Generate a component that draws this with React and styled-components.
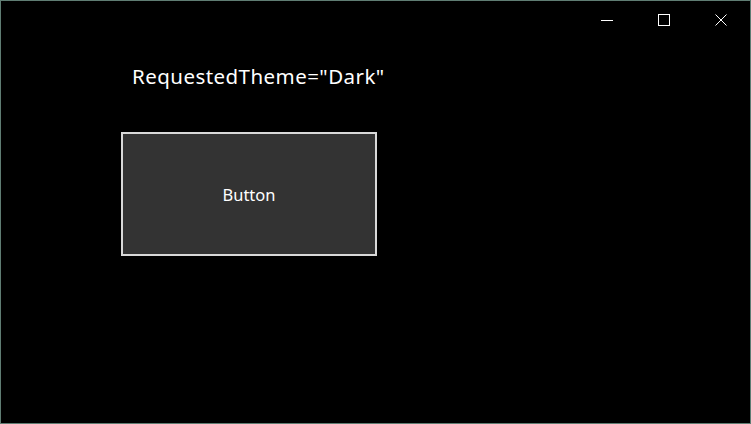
import styled, { createGlobalStyle } from 'styled-components'

const GlobalStyle = createGlobalStyle`
  html, body {
    margin: 0;
    padding: 0;
    background: #000;
  }
`

const CaptionIcon = ({ kind }) => {
  if (kind === 'min') {
    return (
      <svg width='12' height='12' viewBox='0 0 12 12'>
        <path d='M0 6.5H12' stroke='#fff' strokeWidth='1' />
      </svg>
    )
  }
  if (kind === 'max') {
    return (
      <svg width='12' height='12' viewBox='0 0 12 12'>
        <rect x='0.5' y='0.5' width='11' height='11' fill='none' stroke='#fff' strokeWidth='1' />
      </svg>
    )
  }
  return (
    <svg width='12' height='12' viewBox='0 0 12 12'>
      <path d='M0.5 0.5L11.5 11.5M11.5 0.5L0.5 11.5' stroke='#fff' strokeWidth='1' />
    </svg>
  )
}

const App = () => {
  return (
    <>
      <GlobalStyle />
      <Window>
        <TitleBar>
          <CaptionButton><CaptionIcon kind='min' /></CaptionButton>
          <CaptionButton><CaptionIcon kind='max' /></CaptionButton>
          <CaptionButton><CaptionIcon kind='close' /></CaptionButton>
        </TitleBar>
        <Content>
          <Heading>RequestedTheme="Dark"</Heading>
          <ThemeButton>Button</ThemeButton>
        </Content>
      </Window>
    </>
  )
}

export default App

const Window = styled.div`
  box-sizing: border-box;
  width: 751px;
  height: 424px;
  border: 1px solid #5f7d73;
  background: #000;
  color: #fff;
  display: flex;
  flex-direction: column;
  font-family: 'Noto Sans', 'Open Sans', sans-serif;
`

const TitleBar = styled.div`
  display: flex;
  justify-content: flex-end;
  height: 38px;
  padding-right: 1px;
`

const CaptionButton = styled.div`
  width: 57px;
  height: 38px;
  display: flex;
  align-items: center;
  justify-content: center;
`

const Content = styled.div`
  display: flex;
  flex-direction: column;
  align-items: flex-start;
  padding-left: 120px;
`

const Heading = styled.div`
  margin: 23px 0 0 11px;
  font-size: 20.5px;
  line-height: 28px;
  letter-spacing: 0.45px;
  color: #fff;
`

const ThemeButton = styled.div`
  box-sizing: border-box;
  margin-top: 42px;
  width: 256px;
  height: 124px;
  border: 2px solid #d9d9d9;
  background: #333;
  color: #fff;
  font-size: 16.5px;
  display: flex;
  align-items: center;
  justify-content: center;
`
